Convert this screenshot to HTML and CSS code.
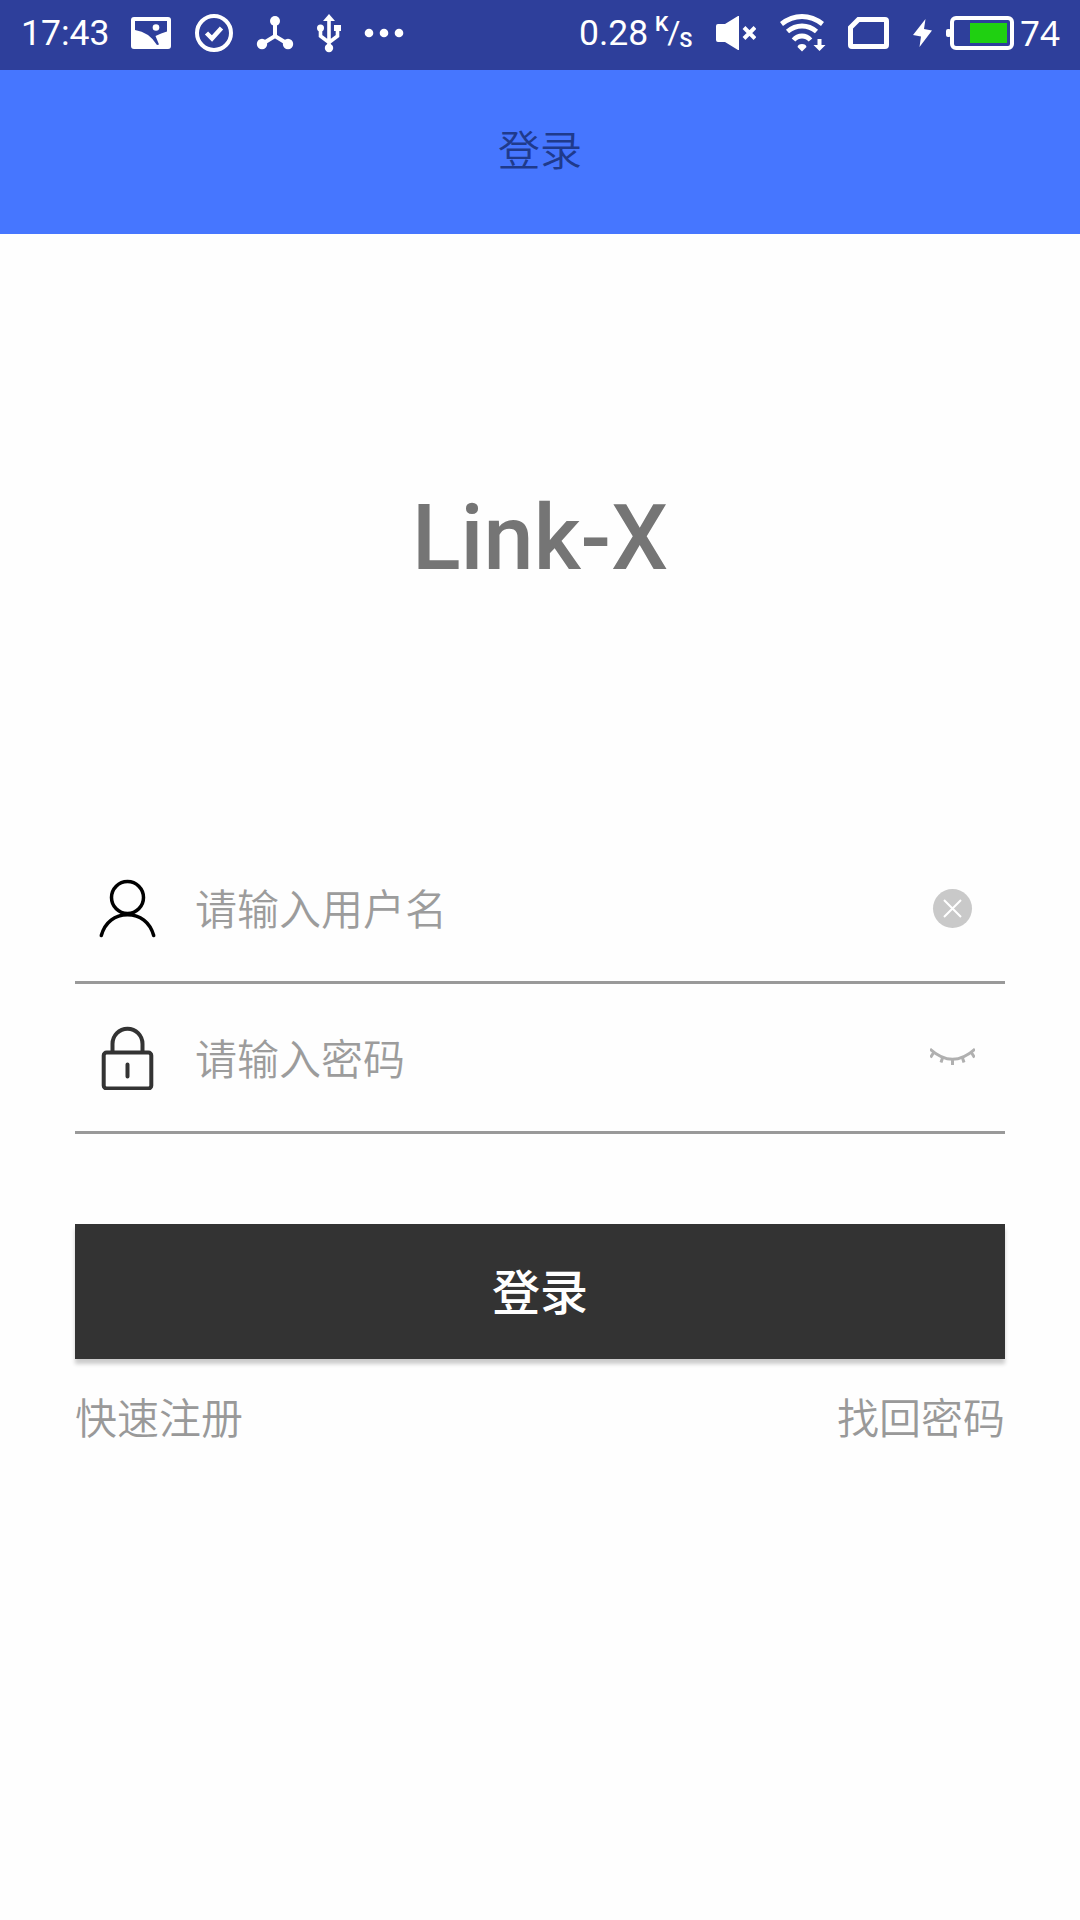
FILE: index.html
```html
<!DOCTYPE html>
<html lang="zh-CN">
<head>
    <meta charset="UTF-8">
    <meta name="viewport" content="width=device-width, initial-scale=1.0">
    <title>登录</title>
    <link rel="stylesheet" href="styles.css">
</head>
<body>
    <div class="status-bar">
        <div class="status-left">
            <span class="clock">17:43</span>
            <svg width="41" height="40" viewBox="0 0 41 40">
                <rect x="0" y="4" width="40" height="32" rx="3" fill="#fff"/>
                <path d="M4 8H36V18.500Q30 20 24.500 23L28 31.500L26 32Q18 19 4 17Z" fill="#2e3f9b"/>
                <circle cx="25" cy="14.500" r="3.300" fill="#fff"/>
            </svg>
            <svg width="40" height="40" viewBox="0 0 40 40" fill="none" stroke="#fff">
                <circle cx="20" cy="20" r="17" stroke-width="4"/>
                <path d="M12.500 20L18 25.500L27.500 15" stroke-width="4.500"/>
            </svg>
            <svg width="38" height="40" viewBox="0 0 38 40" fill="#fff">
                <path d="M19 8V23M6 31L19 23L32 31" fill="none" stroke="#fff" stroke-width="4"/>
                <circle cx="19" cy="8" r="5"/>
                <circle cx="6" cy="31" r="5.200"/>
                <circle cx="32" cy="31" r="5.200"/>
            </svg>
            <svg width="26" height="40" viewBox="0 0 26 40" fill="#fff">
                <path d="M13 6V35M4.500 15V23L13 29.500L21.500 23V15" fill="none" stroke="#fff" stroke-width="3.600"/>
                <path d="M13 1L19 8H7Z"/>
                <circle cx="4.500" cy="15" r="3.500"/>
                <rect x="18" y="12" width="7" height="6"/>
                <circle cx="13" cy="35" r="4.200"/>
            </svg>
            <svg width="40" height="40" viewBox="0 0 40 40" fill="#fff">
                <circle cx="5" cy="20" r="4.300"/>
                <circle cx="20" cy="20" r="4.300"/>
                <circle cx="35" cy="20" r="4.300"/>
            </svg>
        </div>
        <div class="status-right">
            <span class="speed">0.28</span>
            <span class="unit"><span class="unit-top">K</span><span class="unit-slash">/</span><span class="unit-bottom">S</span></span>
            <svg class="icon-mute" width="40" height="40" viewBox="0 0 40 40">
                <path d="M2 11H9L22 3H23V37H22L9 29H2Q0 29 0 27V13Q0 11 2 11Z" fill="#fff"/>
                <path d="M28 14.500L39 25.500M39 14.500L28 25.500" stroke="#fff" stroke-width="4"/>
            </svg>
            <svg class="icon-wifi" width="46" height="40" viewBox="0 0 46 40">
                <g fill="none" stroke="#fff" stroke-width="4.800">
                    <path d="M1.500 11Q11 3.500 22 3.500T42.500 11"/>
                    <path d="M7.500 18.500Q14 13 22 13T36.500 18.500"/>
                    <path d="M13.500 27Q17 23 22 23T30.500 27"/>
                </g>
                <path d="M17.500 34Q18 31 22 31T26.500 34L22 38.500Z" fill="#fff"/>
                <path d="M37.500 26H41.500V32H45.500L39.500 38L33.500 32H37.500Z" fill="#fff"/>
            </svg>
            <svg class="icon-sim" width="41" height="40" viewBox="0 0 41 40">
                <path d="M10.500 6.500H37Q38.500 6.500 38.500 8V32Q38.500 33.500 37 33.500H4Q2.500 33.500 2.500 32V14.500Z" fill="none" stroke="#fff" stroke-width="5"/>
            </svg>
            <svg class="icon-bolt" width="19" height="40" viewBox="0 0 19 40">
                <path d="M12.500 6L0 22L8 23.500L6.500 34L19 17.500L11 16Z" fill="#fff"/>
            </svg>
            <svg class="icon-battery" width="68" height="40" viewBox="0 0 68 40">
                <rect x="0" y="16" width="5" height="8" rx="2" fill="#fff"/>
                <rect x="6" y="5" width="60" height="30" rx="4" fill="none" stroke="#fff" stroke-width="4"/>
                <rect x="24" y="10" width="37" height="20" fill="#1fd011"/>
            </svg>
            <span class="percent">74</span>
        </div>
    </div>

    <div class="header">登录</div>

    <div class="container">
        <h1 class="logo">Link-X</h1>

        <form class="login-form">
            <div class="field">
                <svg width="65" height="65" viewBox="0 0 65 65" fill="none" stroke="#000" stroke-width="3.500" stroke-linecap="round">
                    <circle cx="32.500" cy="22.500" r="16"/>
                    <path d="M6.300 60.500C10 47 20 39.700 32.500 39.700S55 47 58.700 60.500"/>
                </svg>
                <input type="text" placeholder="请输入用户名">
                <svg width="45" height="45" viewBox="0 0 45 45">
                    <circle cx="22.500" cy="23.500" r="19.500" fill="#c9c9c9"/>
                    <path d="M14 15L31 32M31 15L14 32" stroke="#fff" stroke-width="2"/>
                </svg>
            </div>
            <div class="field">
                <svg width="65" height="65" viewBox="0 0 65 65" fill="none" stroke="#333" stroke-width="4" stroke-linecap="round">
                    <rect x="8.700" y="27.500" width="47.600" height="36" rx="3"/>
                    <path d="M17.500 27V19A15 15.300 0 0 1 47.500 19V27M32.500 39.500V51.500"/>
                </svg>
                <input type="password" placeholder="请输入密码">
                <svg width="45" height="45" viewBox="0 0 45 45" fill="none" stroke="#b0b0b0" stroke-width="3">
                    <path d="M0 14Q22.500 34.500 45 14"/>
                    <path d="M4 17L0.500 22.500M13 21.500L11 27.500M22.500 24V30M32 21.500L34 27.500M41 17L44.500 22.500"/>
                </svg>
            </div>
            <button type="button" class="login-button">登录</button>
        </form>

        <div class="links">
            <a href="#">快速注册</a>
            <a href="#">找回密码</a>
        </div>
    </div>
</body>
</html>
```

FILE: styles.css
```css
body {
    font-family: Roboto, "Noto Sans CJK SC", sans-serif;
    background-color: #fefefe;
    margin: 0;
    min-height: 100vh;
}
svg {
    display: block;
    flex-shrink: 0;
}

/* Barra de estado */
.status-bar {
    box-sizing: border-box;
    height: 70px;
    padding: 0 20px 4px;
    background-color: #2e3f9b;
    color: white;
    font-size: 35.5px;
    line-height: 41px;
    display: flex;
    justify-content: space-between;
    align-items: center;
}
.status-left {
    display: flex;
    gap: 22px;
}
.status-right {
    display: flex;
}
.clock {
    box-sizing: border-box;
    width: 89px;
    padding-left: 1px;
}
.speed {
    width: 76px;
}
.unit {
    width: 61px;
    display: flex;
    font-size: 21px;
    font-weight: 600;
}
.unit-top {
    line-height: 24px;
    margin-top: -1px;
}
.unit-slash {
    margin: 0 -1px;
    font-size: 32px;
    font-weight: 400;
    line-height: 38px;
}
.unit-bottom {
    line-height: 24px;
    margin-top: 15px;
}
.icon-wifi {
    margin-left: 24px;
}
.icon-sim {
    margin-left: 22px;
}
.icon-bolt {
    margin-left: 24px;
}
.icon-battery {
    margin-left: 14px;
}
.percent {
    margin-left: 6px;
    width: 40px;
    font-family: "Noto Sans", sans-serif;
    font-size: 35px;
    line-height: 40px;
}

.header {
    box-sizing: border-box;
    height: 164px;
    padding-bottom: 10px;
    background-color: #4676ff;
    color: #1f3a8c;
    font-size: 42px;
    font-weight: 350;
    display: flex;
    justify-content: center;
    align-items: center;
}

.container {
    padding: 0 75px;
}
.logo {
    margin: 0;
    height: 600px;
    line-height: 610px;
    text-align: center;
    font-size: 90px;
    font-weight: 500;
    color: #757575;
}
.field {
    box-sizing: border-box;
    height: 150px;
    padding: 0 30px 0 20px;
    border-bottom: 3px solid #999;
    display: flex;
    align-items: center;
}
.field input {
    flex: 1;
    min-width: 0;
    margin-left: 35px;
    padding: 6px 0 0;
    border: none;
    outline: none;
    background: none;
    font-family: inherit;
    font-size: 42px;
    font-weight: 350;
}
.field input::placeholder {
    color: #9c9c9c;
}
.login-button {
    display: block;
    width: 100%;
    height: 135px;
    margin-top: 90px;
    padding: 0 0 5px;
    border: none;
    background-color: #333;
    color: white;
    font-family: inherit;
    font-size: 48px;
    font-weight: 500;
    box-shadow: 0 5px 4px rgba(0, 0, 0, 0.2);
}
.links {
    margin-top: 26px;
    display: flex;
    justify-content: space-between;
    font-size: 42px;
    font-weight: 350;
}
.links a {
    color: #999;
    text-decoration: none;
}
```
